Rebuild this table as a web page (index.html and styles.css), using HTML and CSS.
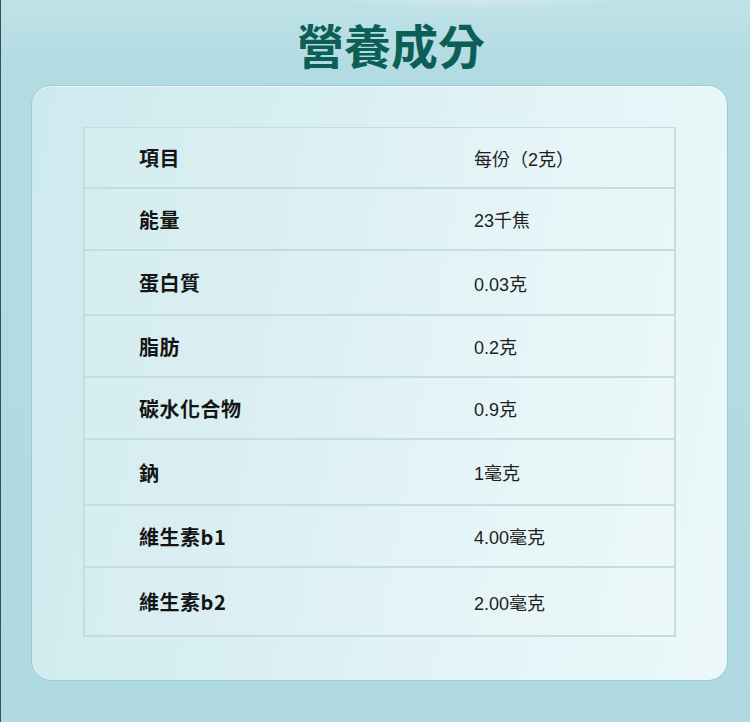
FILE: index.html
```html
<!DOCTYPE html>
<html lang="zh-Hant">
<head>
<meta charset="utf-8">
<title>營養成分</title>
<link rel="stylesheet" href="styles.css">
</head>
<body>
<div class="page">
  <div class="glow"></div>
  <h1 class="title">營養成分</h1>
  <section class="card">
    <div class="table">
      <div class="row"><div class="name">項目</div><div class="value">每份（2克）</div></div>
      <div class="row"><div class="name">能量</div><div class="value">23千焦</div></div>
      <div class="row"><div class="name">蛋白質</div><div class="value">0.03克</div></div>
      <div class="row"><div class="name">脂肪</div><div class="value">0.2克</div></div>
      <div class="row"><div class="name">碳水化合物</div><div class="value">0.9克</div></div>
      <div class="row"><div class="name">鈉</div><div class="value">1毫克</div></div>
      <div class="row"><div class="name">維生素b1</div><div class="value">4.00毫克</div></div>
      <div class="row"><div class="name">維生素b2</div><div class="value">2.00毫克</div></div>
    </div>
  </section>
</div>
</body>
</html>
```
FILE: styles.css
```css
* { box-sizing: border-box; }
html, body { margin: 0; padding: 0; }
body {
  width: 750px;
  height: 722px;
  overflow: hidden;
  background: #b0dbe1;
  font-family: "Noto Sans CJK TC", "Noto Sans", sans-serif;
}
.page {
  position: relative;
  width: 750px;
  height: 722px;
  padding: 15px 23px 0 30px;
  background: linear-gradient(180deg, #bfe2e7 0px, #b3dce2 60px, #b0dae1 100%);
  border-left: 1px solid #3d4d50;
}
.glow {
  position: absolute;
  left: 300px;
  top: -30px;
  width: 360px;
  height: 40px;
  border-radius: 50%;
  background: radial-gradient(ellipse at center, rgba(255,255,255,0.55), rgba(255,255,255,0) 70%);
}
.title {
  position: relative;
  margin: 0;
  height: 63px;
  text-align: center;
  font-size: 47px;
  line-height: 58px;
  font-weight: 700;
  color: #0c5f57;
  padding-left: 24px;
}
.card {
  margin-top: 7px;
  width: 697px;
  height: 596px;
  border-radius: 20px;
  border: 1px solid #9ccbd1;
  background: linear-gradient(100deg, #cdeaee 0%, #d9eff2 40%, #e5f4f7 70%, #ecf8fa 100%);
  box-shadow: inset 0 1px 0 rgba(255,255,255,0.6);
  padding: 41px 0 0 51px;
}
.table {
  width: 593px;
  display: grid;
  grid-template-rows: 59px 62px 65px 62px 62px 66px 62px 69px;
  border: 2px solid #c4dde0;
  border-top-width: 1px;
  background: rgba(255,255,255,0.1);
}
.row {
  display: grid;
  grid-template-columns: 389px 1fr;
  align-items: center;
  border-top: 2px solid #c4dde0;
}
.row:first-child { border-top: none; }
.name {
  padding-left: 54px;
  font-size: 20px;
  font-weight: 700;
  color: #141414;
  letter-spacing: 0.5px;
}
.value {
  font-family: "Liberation Sans", "Noto Sans CJK TC", sans-serif;
  font-size: 18px;
  color: #1e1e1e;
  font-weight: 400;
}
```
